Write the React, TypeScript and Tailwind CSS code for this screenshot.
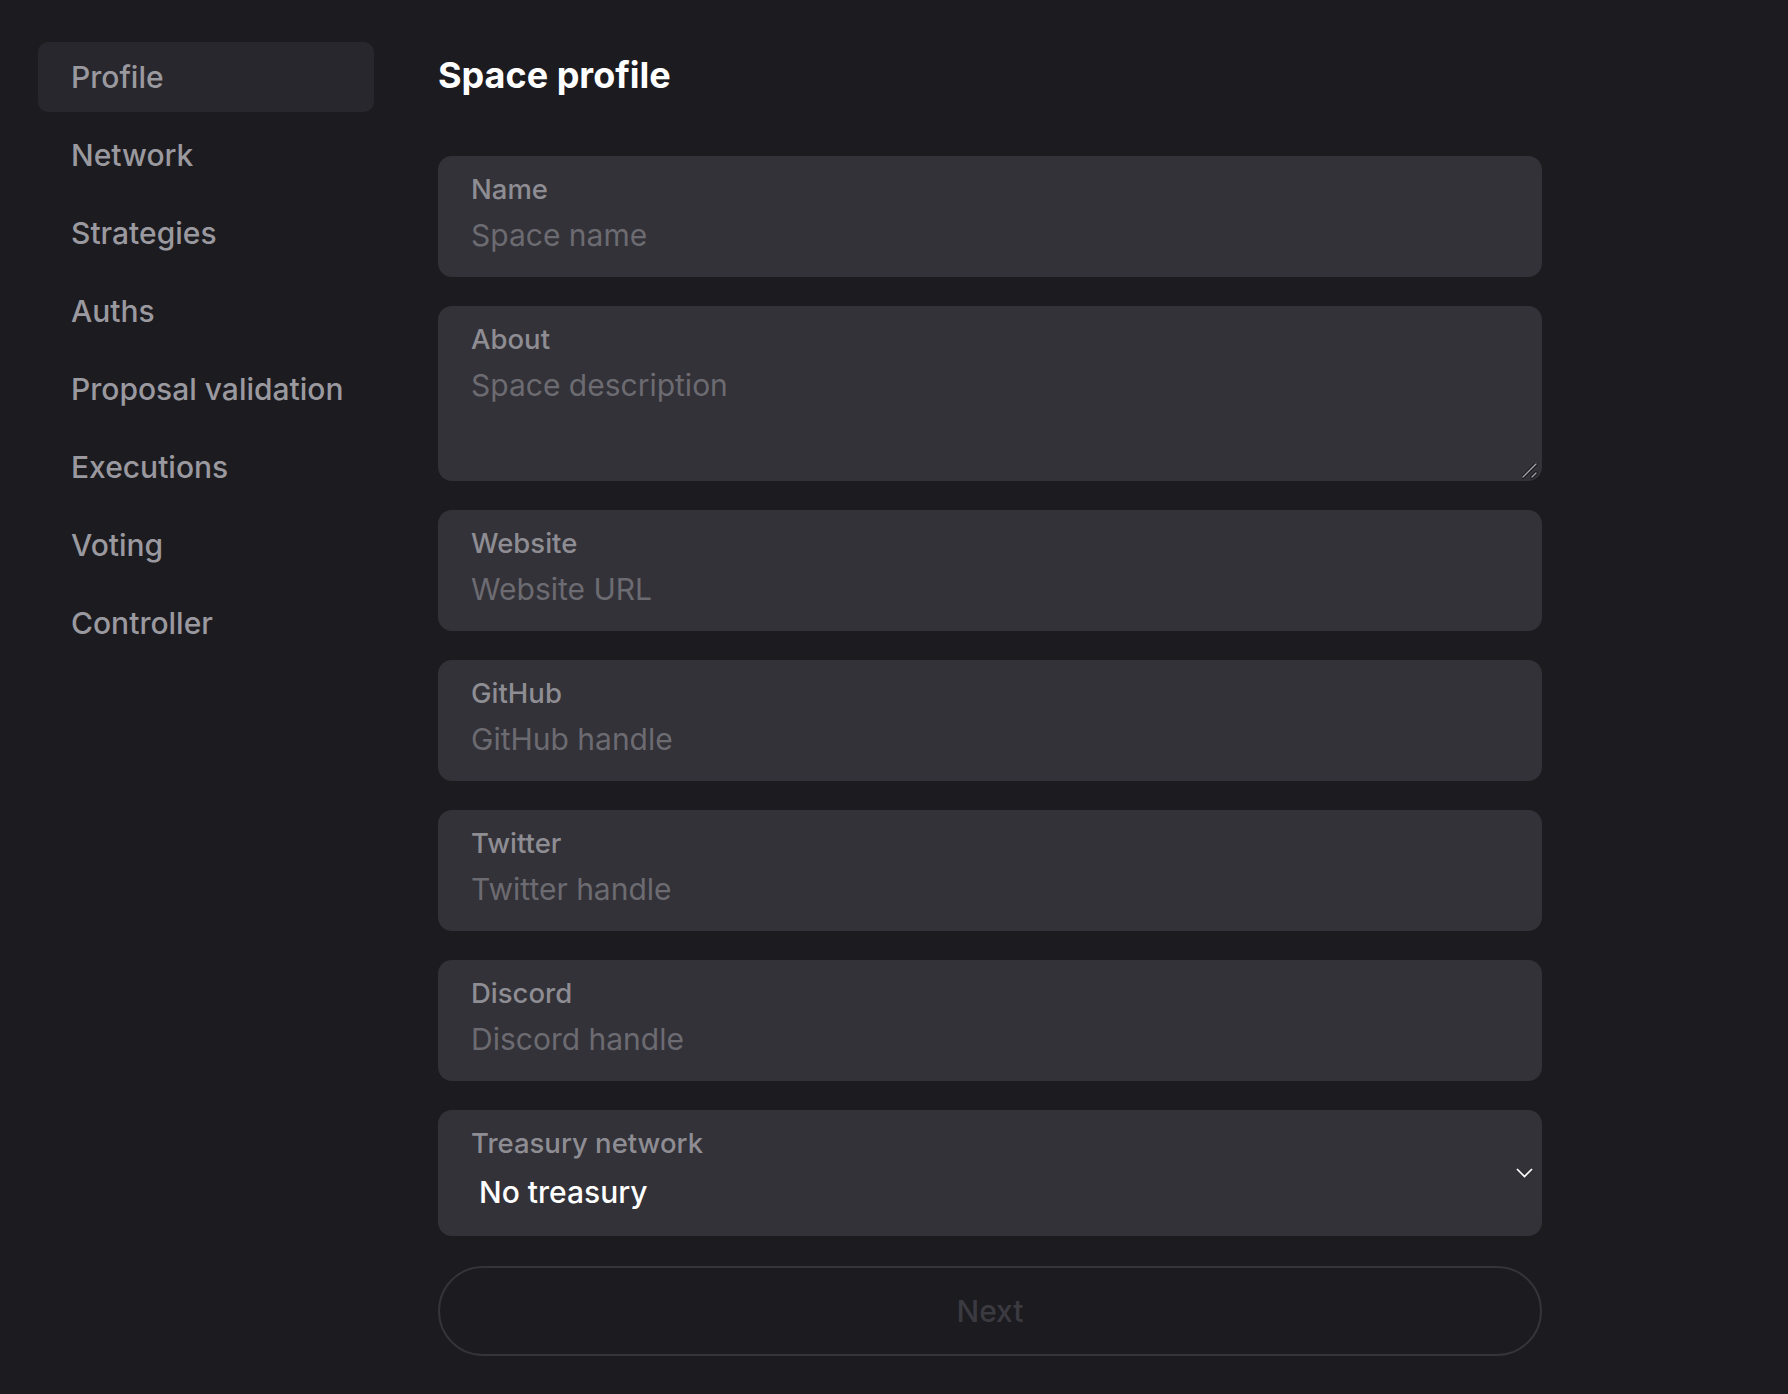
import React from "react";

const navItems = [
  "Profile",
  "Network",
  "Strategies",
  "Auths",
  "Proposal validation",
  "Executions",
  "Voting",
  "Controller",
];

const fields = [
  { label: "Name", placeholder: "Space name" },
  { label: "About", placeholder: "Space description", area: true },
  { label: "Website", placeholder: "Website URL" },
  { label: "GitHub", placeholder: "GitHub handle" },
  { label: "Twitter", placeholder: "Twitter handle" },
  { label: "Discord", placeholder: "Discord handle" },
];

const Field = ({ label, placeholder, area }: { label: string; placeholder: string; area?: boolean }) => (
  <div className="relative flex flex-col rounded-[14px] bg-[#333238] overflow-hidden">
    <label className="px-[33px] pt-[17px] text-[27.5px] leading-[32px] font-medium text-[#8e8d93]">{label}</label>
    {area ? (
      <>
        <textarea
          placeholder={placeholder}
          className="block w-full h-[118px] mt-[8px] px-[33px] text-[30px] leading-[44px] bg-transparent text-white placeholder:text-[#6c6b71] outline-none resize-none"
        />
        {/* resize grip */}
        <svg className="absolute right-[4px] bottom-[2px] w-[16px] h-[16px] pointer-events-none" viewBox="0 0 16 16">
          <g stroke="#141318" strokeWidth="3.2" strokeLinecap="round">
            <path d="M1 14 L14 1" />
            <path d="M10 14 L14 10" />
          </g>
          <g stroke="#a3a2a8" strokeWidth="1.4" strokeLinecap="round">
            <path d="M1 14 L14 1" />
            <path d="M10 14 L14 10" />
          </g>
        </svg>
      </>
    ) : (
      <input
        placeholder={placeholder}
        className="w-full h-[44px] mt-[8px] mb-[20px] px-[33px] text-[30px] leading-[44px] bg-transparent text-white placeholder:text-[#6c6b71] outline-none"
      />
    )}
  </div>
);

export default function App() {
  return (
    <div className="min-h-[1394px] w-full bg-[#1c1b20] font-['Inter',sans-serif] flex px-[38px] pt-[42px] pb-[38px]">
      <nav className="w-[336px] flex flex-col gap-[8px] shrink-0">
        {navItems.map((item, i) => (
          <div
            key={item}
            className={`h-[70px] flex items-center px-[33px] rounded-[10px] text-[30px] font-medium whitespace-nowrap text-[#9a999f] ${
              i === 0 ? "bg-[#28272d]" : ""
            }`}
          >
            {item}
          </div>
        ))}
      </nav>
      <main className="ml-[64px] w-[1104px] flex flex-col">
        <h1 className="mt-[13px] text-[36px] leading-[40px] font-bold text-white">Space profile</h1>
        <div className="mt-[61px] flex flex-col gap-[29px]">
          {fields.map((f) => (
            <Field key={f.label} {...f} />
          ))}
          <div className="relative flex flex-col rounded-[14px] bg-[#333238] h-[126px]">
            <label className="px-[33px] pt-[17px] text-[27.5px] leading-[32px] font-medium text-[#8e8d93]">
              Treasury network
            </label>
            <select className="appearance-none mt-[10px] px-[41px] h-[46px] text-[30px] font-medium bg-transparent text-white outline-none">
              <option>No treasury</option>
            </select>
            <svg
              className="absolute right-[9px] top-1/2 -translate-y-1/2 w-[17px] h-[10px] pointer-events-none"
              viewBox="0 0 17 10"
              fill="none"
              stroke="white"
              strokeWidth="1.7"
            >
              <path d="M1 1 L8.5 8.5 L16 1" />
            </svg>
          </div>
        </div>
        <button className="mt-[30px] h-[90px] w-full rounded-full border-2 border-[#35343a] text-[30px] font-medium text-[#3b3a40]">
          Next
        </button>
      </main>
    </div>
  );
}
